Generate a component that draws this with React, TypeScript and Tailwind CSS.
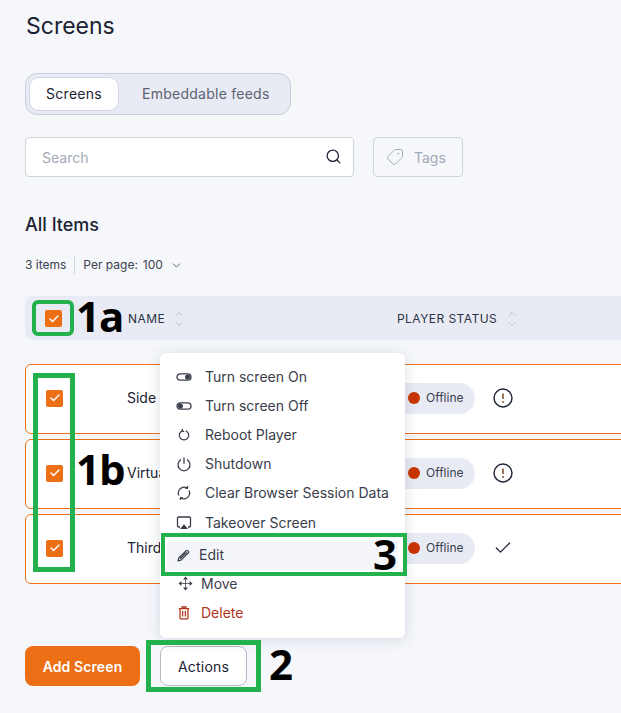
import React from "react";
import { Search, Tag, ChevronDown, ChevronUp, Check } from "lucide-react";

const ToggleOn = () => (
  <svg width="16" height="16" viewBox="0 0 16 16" fill="none" stroke="currentColor" strokeWidth="1.3">
    <rect x="1" y="4.8" width="14" height="6.4" rx="3.2" />
    <circle cx="11.6" cy="8" r="1.9" fill="currentColor" />
  </svg>
);

const ToggleOff = () => (
  <svg width="16" height="16" viewBox="0 0 16 16" fill="none" stroke="currentColor" strokeWidth="1.3">
    <rect x="1" y="4.8" width="14" height="6.4" rx="3.2" />
    <circle cx="4.4" cy="8" r="1.9" fill="currentColor" />
  </svg>
);

const Reboot = () => (
  <svg width="16" height="16" viewBox="0 0 16 16" fill="none" stroke="currentColor" strokeWidth="1.2">
    <path d="M6.2 3.9a4.7 4.7 0 1 0 3.6 0" />
    <path d="M6.6 1.9 6 4.1l2.2.5" />
  </svg>
);

const Shutdown = () => (
  <svg width="16" height="16" viewBox="0 0 16 16" fill="none" stroke="currentColor" strokeWidth="1.3">
    <path d="M5 3.6a6 6 0 1 0 6 0" />
    <path d="M8 1.6v6.2" />
  </svg>
);

const ClearData = () => (
  <svg width="16" height="16" viewBox="0 0 16 16" fill="none" stroke="currentColor" strokeWidth="1.3">
    <path d="M3 5.2A5.8 5.8 0 0 1 11.2 3" />
    <path d="M13.2 5.5a5.8 5.8 0 0 1-.2 5.3" />
    <path d="M13 10.8A5.8 5.8 0 0 1 4.8 13" />
    <path d="M2.8 10.5a5.8 5.8 0 0 1 .2-5.3" />
    <path d="m11.8 1.2-.4 2.2-2.2-.2M4.2 14.8l.4-2.2 2.2.2" />
  </svg>
);

const Takeover = () => (
  <svg width="16" height="16" viewBox="0 0 16 16" fill="none">
    <path d="M4 12H2.6A1.1 1.1 0 0 1 1.5 11V3.1A1.1 1.1 0 0 1 2.6 2h10.8a1.1 1.1 0 0 1 1.1 1.1V11a1.1 1.1 0 0 1-1.1 1H12" stroke="currentColor" strokeWidth="1.3" />
    <path d="M8 9.2 12 14H4z" fill="currentColor" />
  </svg>
);

const Pencil = () => (
  <svg width="13" height="13" viewBox="0 0 13 13" fill="none" stroke="currentColor">
    <path d="M1 12l.8-3L9.2 1.6a.9.9 0 0 1 1.3 0l.9.9a.9.9 0 0 1 0 1.3L4 11.2z" strokeWidth="1.2" strokeLinejoin="round" />
    <path d="M3 9.8 9.6 3.2" strokeWidth="1.4" />
  </svg>
);

const MoveIcon = () => (
  <svg width="15" height="15" viewBox="0 0 15 15" fill="currentColor">
    <path d="M7.5.5 10 3.4H5zM7.5 14.5 5 11.6h5zM.5 7.5 3.4 5v5zM14.5 7.5 11.6 10V5z" />
    <path d="M7.5 3v9M3 7.5h9" stroke="currentColor" strokeWidth="0.8" fill="none" />
  </svg>
);

const TrashIcon = () => (
  <svg width="14" height="14" viewBox="0 0 14 14" fill="none" stroke="currentColor" strokeWidth="1.3">
    <path d="M1.8 2.6h10.4M5 2.4V1h4v1.4" />
    <path d="M3 2.8v9.1a1 1 0 0 0 1 1h6a1 1 0 0 0 1-1V2.8" />
    <path d="M5.6 5v5.6M8.4 5v5.6" />
  </svg>
);

const Exclaim = () => (
  <svg width="20" height="20" viewBox="0 0 20 20" fill="none">
    <circle cx="10" cy="10" r="9" stroke="#1b2233" strokeWidth="1.4" />
    <path d="M10 5.5v5.6" stroke="#7a4a2a" strokeWidth="1.5" />
    <circle cx="10" cy="14" r="0.9" fill="#7a4a2a" />
  </svg>
);

const SortIcon = () => (
  <span className="flex flex-col items-center text-[#a9afbd]">
    <ChevronUp size={12} strokeWidth={1.4} className="-mb-[1px]" />
    <ChevronDown size={12} strokeWidth={1.4} className="-mt-[1px]" />
  </span>
);

const Checkbox = () => (
  <span className="flex h-[17px] w-[17px] shrink-0 items-center justify-center rounded-[2px] bg-[#ec6f16] text-white">
    <Check size={12} strokeWidth={3} />
  </span>
);

const rows = [
  { name: "Side", ok: false },
  { name: "Virtual", ok: false },
  { name: "Third", ok: true },
];

const menuItems = [
  { label: "Turn screen On", icon: <ToggleOn /> },
  { label: "Turn screen Off", icon: <ToggleOff /> },
  { label: "Reboot Player", icon: <Reboot /> },
  { label: "Shutdown", icon: <Shutdown /> },
  { label: "Clear Browser Session Data", icon: <ClearData /> },
];

const App: React.FC = () => {
  return (
    <div className="relative h-[713px] w-[621px] overflow-hidden bg-[#f5f7fb] pl-[25px] font-['Inter',sans-serif] text-[#1b2233]">
      <h1 className="mt-[10px] h-8 pl-px text-[23px] leading-8 font-normal">Screens</h1>

      <div className="mt-[31px] flex h-[42px] w-[266px] items-center rounded-xl border border-[#c9ced9] bg-[#e8ebf3] pl-[3px] text-sm tracking-[0.25px]">
        <div className="flex h-[34px] w-[90px] items-center justify-center rounded-[10px] border border-[#d3d7e0] bg-white">
          Screens
        </div>
        <div className="ml-[23px] text-[#5c6373]">Embeddable feeds</div>
      </div>

      <div className="mt-[22px] flex gap-[19px]">
        <div className="flex h-10 w-[329px] items-center justify-between rounded border border-[#cfd3dc] bg-white pr-[11px] pl-4 text-[14px] text-[#a3a9b6]">
          <span>Search</span>
          <Search size={17} strokeWidth={1.8} className="-mt-[2px] text-[#1b2233]" />
        </div>
        <div className="flex h-10 w-[90px] items-center gap-[10px] rounded border border-[#cfd3dc] pl-[12px] text-[14px] text-[#a3a9b6]">
          <Tag size={18} strokeWidth={1.3} className="-scale-x-100" />
          <span>Tags</span>
        </div>
      </div>

      <h2 className="mt-9 h-6 text-[18px] leading-6 font-medium">All Items</h2>

      <div className="mt-[19px] flex h-[18px] items-center text-xs text-[#3a404f]">
        <span>3 items</span>
        <span className="mx-2 h-[17px] w-px bg-[#cfd3dc]" />
        <span>Per page:</span>
        <span className="ml-[5px]">100</span>
        <ChevronDown size={13} strokeWidth={1.4} className="ml-[7px]" />
      </div>

      <div className="mt-[22px] flex h-11 w-[640px] items-center rounded-l-lg bg-[#e8ebf3] pt-px pl-5 text-xs tracking-[0.45px] text-[#2b3245]">
        <Checkbox />
        <span className="ml-[66px] w-[269px] shrink-0">
          <span className="inline-flex items-center gap-2">
            NAME <SortIcon />
          </span>
        </span>
        <span className="inline-flex items-center gap-[9px]">
          PLAYER STATUS <SortIcon />
        </span>
      </div>

      <div className="mt-6 flex w-[640px] flex-col gap-[5px]">
        {rows.map((row) => (
          <div
            key={row.name}
            className="flex h-[70px] items-center rounded-l-md border border-[#ec6f16] bg-white pb-[2px] pl-5 text-sm"
          >
            <Checkbox />
            <span className="ml-[64px] w-[273px] shrink-0">{row.name}</span>
            <span className="flex h-[31px] w-[75px] items-center rounded-r-full bg-[#e8ebf3] pl-[8px] text-xs text-[#3a404f]">
              <span className="mr-[6px] h-3 w-3 shrink-0 rounded-full bg-[#c93400]" />
              Offline
            </span>
            <span className="ml-[18px] flex w-5 justify-center">
              {row.ok ? <Check size={20} strokeWidth={1.5} /> : <Exclaim />}
            </span>
          </div>
        ))}
      </div>

      <div className="mt-[62px] flex gap-5">
        <button className="h-10 w-[115px] rounded-lg bg-[#ec6f16] pt-px text-sm font-semibold tracking-[0.1px] text-white">Add Screen</button>
        <button className="h-10 w-[87px] rounded-lg border border-[#b5b9c4] bg-white pt-px text-sm tracking-[0.2px]">Actions</button>
      </div>

      {/* dropdown over the table */}
      <div className="absolute top-[353px] left-[160px] w-[245px] rounded-md bg-white pt-[9px] pb-[11px] text-sm text-[#3a3d4a] shadow-[0_2px_14px_rgba(40,50,80,0.16)]">
        {menuItems.map((item) => (
          <div key={item.label} className="flex h-[29px] items-center pl-4">
            <span className="flex w-4 justify-center">{item.icon}</span>
            <span className="ml-[13px] whitespace-nowrap">{item.label}</span>
          </div>
        ))}
        <div className="flex h-[29px] items-center pt-[2px] pl-4">
          <span className="flex w-4 justify-center"><Takeover /></span>
          <span className="ml-[13px] whitespace-nowrap">Takeover Screen</span>
        </div>
        <div className="mx-[7px] mt-1 flex h-[30px] items-center rounded bg-[#f4f5fa] pl-[10px]">
          <Pencil />
          <span className="ml-[9px]">Edit</span>
        </div>
        <div className="flex h-[27px] items-center pl-[18px]">
          <MoveIcon />
          <span className="ml-2">Move</span>
        </div>
        <div className="mt-px flex h-[29px] items-center pl-[17px] text-[#b5361a]">
          <TrashIcon />
          <span className="ml-[10px]">Delete</span>
        </div>
      </div>

      {/* green annotations added on top of the screenshot */}
      <div className="absolute top-[300px] left-[32px] h-9 w-[42px] rounded-md border-4 border-[#22b14c]" />
      <div className="absolute top-[373px] left-[33px] h-[199px] w-[42px] border-[5px] border-[#22b14c]" />
      <div className="absolute top-[533px] left-[161px] h-[43px] w-[246px] border-4 border-[#22b14c]" />
      <div className="absolute top-[640px] left-[146px] h-[52px] w-[115px] border-[5px] border-[#22b14c]" />

      <span className="absolute top-[288px] left-[76px] font-['Open_Sans',sans-serif] text-[42px] leading-[56px] font-bold tracking-[-1px] text-black">1a</span>
      <span className="absolute top-[441px] left-[76px] font-['Open_Sans',sans-serif] text-[42px] leading-[56px] font-bold tracking-[-1px] text-black">1b</span>
      <span className="absolute top-[526px] left-[373px] font-['Open_Sans',sans-serif] text-[42px] leading-[56px] font-bold text-black">3</span>
      <span className="absolute top-[636px] left-[269px] font-['Open_Sans',sans-serif] text-[42px] leading-[56px] font-bold text-black">2</span>
    </div>
  );
};

export default App;
